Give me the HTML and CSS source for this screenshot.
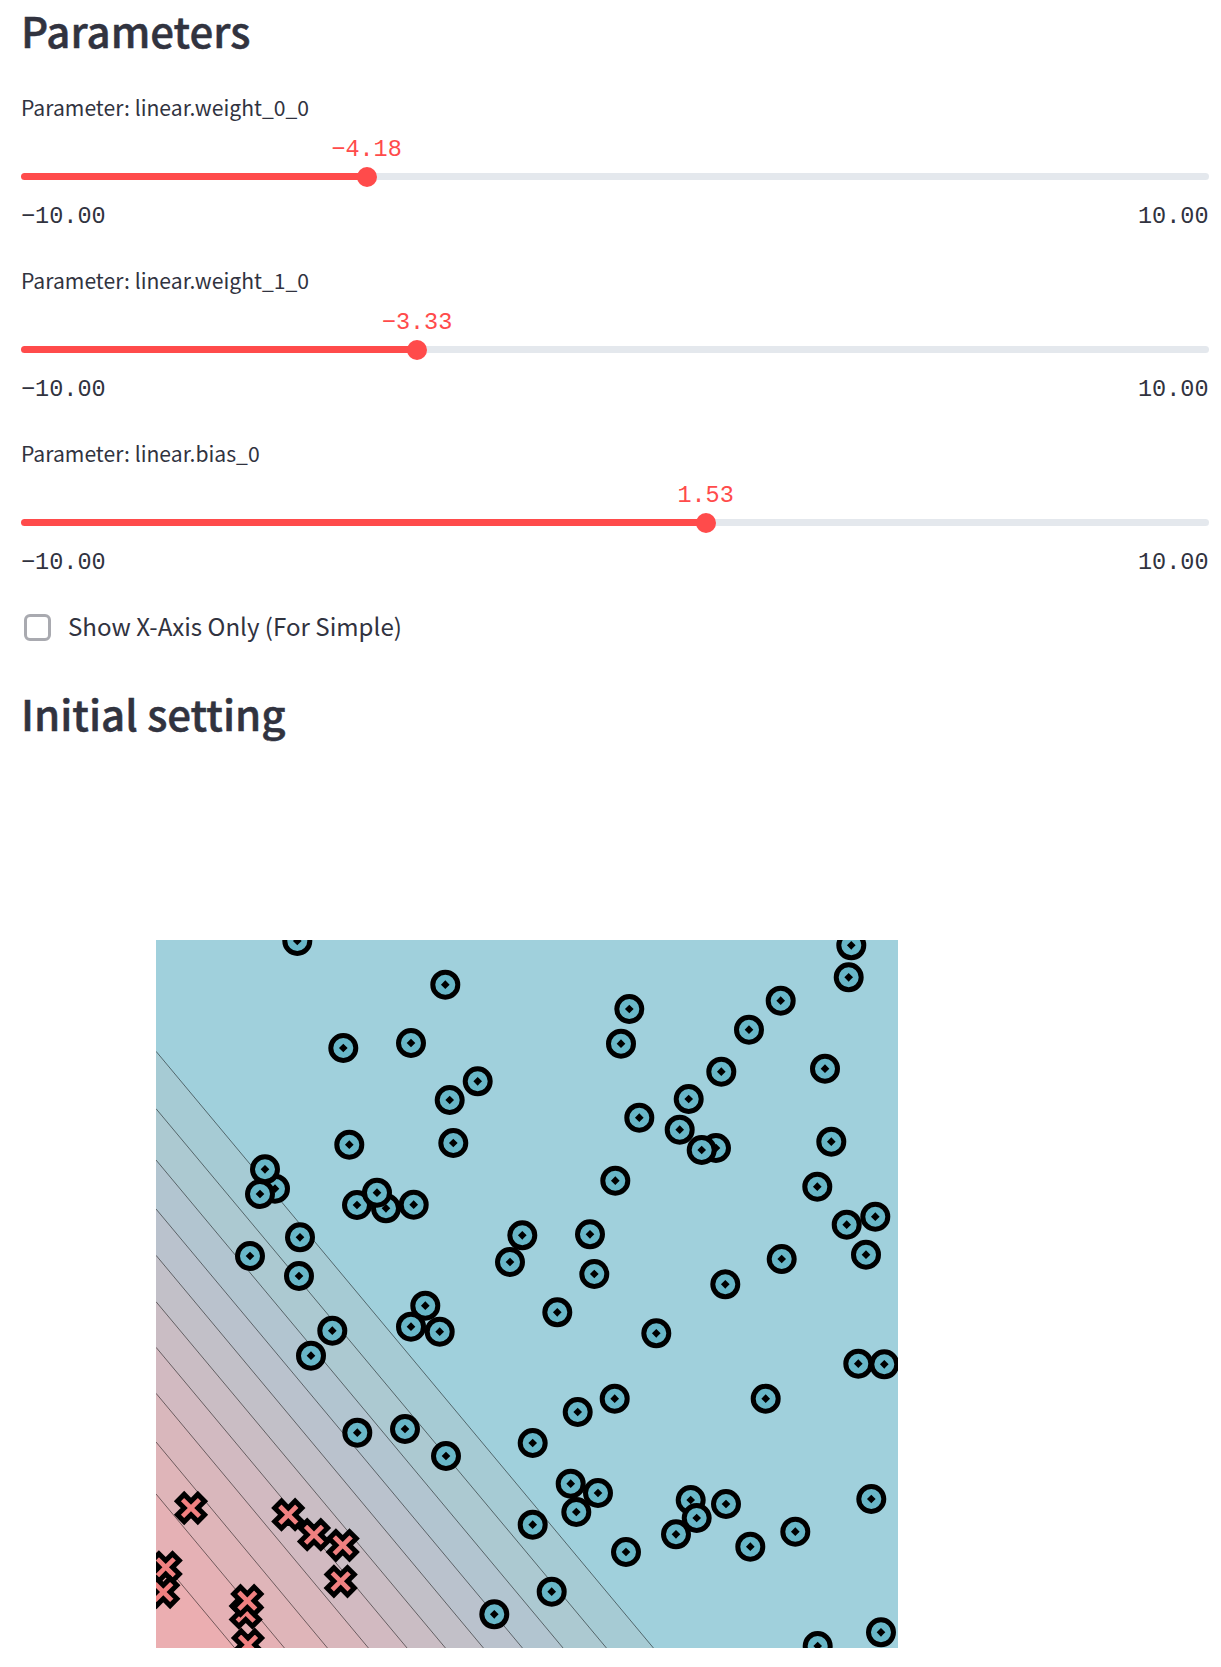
FILE: index.html
```html
<!DOCTYPE html>
<html lang="en">
<head>
<meta charset="utf-8">
<title>Parameters</title>
<link rel="stylesheet" href="styles.css">
</head>
<body>
<main class="page">
  <h2 class="heading">Parameters</h2>
  <section class="sliders">
    <div class="slider">
      <label class="slider-label">Parameter: linear.weight_0_0</label>
      <div class="slider-body" style="--value: 29.1%">
        <output class="slider-value">−4.18</output>
        <div class="track"><div class="thumb"></div></div>
        <div class="range"><span>−10.00</span><span>10.00</span></div>
      </div>
    </div>
    <div class="slider">
      <label class="slider-label">Parameter: linear.weight_1_0</label>
      <div class="slider-body" style="--value: 33.35%">
        <output class="slider-value">−3.33</output>
        <div class="track"><div class="thumb"></div></div>
        <div class="range"><span>−10.00</span><span>10.00</span></div>
      </div>
    </div>
    <div class="slider">
      <label class="slider-label">Parameter: linear.bias_0</label>
      <div class="slider-body" style="--value: 57.65%">
        <output class="slider-value">1.53</output>
        <div class="track"><div class="thumb"></div></div>
        <div class="range"><span>−10.00</span><span>10.00</span></div>
      </div>
    </div>
  </section>
  <label class="check"><span class="box"></span><span>Show X-Axis Only (For Simple)</span></label>
  <h2 class="heading heading-setting">Initial setting</h2>
  <svg class="plot" id="plot" viewBox="0 0 742.3 708.3" width="742.3" height="708.3"></svg>
</main>
<script src="plot.js"></script>
</body>
</html>
```
FILE: styles.css
```css
* { box-sizing: border-box; }
body {
  margin: 0;
  background: #fff;
  color: #31333f;
  font-family: "Noto Sans CJK SC", "Noto Sans", sans-serif;
}
.page { padding: 0 12.5px 0 21px; }
.heading {
  margin: 0;
  font-size: 42px;
  line-height: 59px;
  font-weight: 500;
  white-space: nowrap;
  -webkit-text-stroke: 0.5px currentColor;
}
.sliders { padding-top: 34px; }
.slider { height: 173px; }
.slider-label {
  display: block;
  font-size: 21.15px;
  line-height: 28px;
  white-space: nowrap;
}
.slider-body {
  padding-top: 16px;
  font-family: "Liberation Mono", monospace;
  font-size: 23.5px;
  line-height: 26px;
}
.slider-value {
  display: block;
  width: max-content;
  margin-left: var(--value);
  transform: translateX(-50%);
  color: #ff4b4b;
}
.track {
  display: flex;
  align-items: center;
  height: 7px;
  margin-top: 10px;
  border-radius: 4px;
  background: linear-gradient(to right, #ff4b4b var(--value), #e4e8ed var(--value));
}
.thumb {
  flex: none;
  width: 20px;
  height: 20px;
  margin-left: calc(var(--value) - 10px);
  border-radius: 50%;
  background: #ff4b4b;
}
.range { display: flex; justify-content: space-between; padding-top: 24px; }
.check {
  display: flex;
  align-items: center;
  gap: 17px;
  height: 34px;
  margin-top: -3px;
  padding-left: 3px;
  font-size: 24.1px;
  line-height: 34px;
}
.box { width: 27px; height: 27px; margin-top: 2px; border: 3px solid #a9aab0; border-radius: 6px; }
.heading-setting { margin-top: 40px; }
.plot { display: block; margin: 198px 0 0 135px; overflow: hidden; }
.contour { stroke: #000; stroke-opacity: 0.5; stroke-width: 1; }
.marker { stroke: #000; stroke-width: 5; }
.positive { fill: #69b7c8; }
.negative { fill: #f08080; }
```
FILE: plot.js
```js
const plot = document.getElementById("plot");
const W = 742.3, H = 708.3;

function add(tag, attrs) {
  const el = document.createElementNS("http://www.w3.org/2000/svg", tag);
  for (const k in attrs) el.setAttribute(k, attrs[k]);
  plot.appendChild(el);
}

// Each level crosses the left edge at y and the bottom edge at x.
const levels = [
  [111.3, 497.7, "#a6cbd4"], [168.7, 450.7, "#acc9d1"], [220, 407.3, "#b2c5d0"],
  [269, 366.7, "#bac2cd"], [315.3, 327.7, "#c2c0c8"], [361.7, 289.7, "#cabdc4"],
  [407.3, 251.3, "#d2bac1"], [453.3, 212.7, "#d9b7bc"], [502, 171.7, "#dfb5b9"],
  [554, 128.7, "#e5b1b5"], [613.7, 79, "#ebaeb1"]
];
add("rect", { width: W, height: H, fill: "#a0d0dc" });
for (const [y, x, fill] of levels) add("path", { d: `M0,${y}L${x},${H}H0Z`, fill });
for (const [y, x] of levels) add("path", { d: `M0,${y}L${x},${H}`, class: "contour" });

const positive = [
  [141.3,1],[289.3,44.7],[187.3,108],[255,103],[321.7,141.3],[293.7,160],[297.3,203],[193.3,204.7],
  [119,248.7],[109,229.3],[104,254],[230,268.3],[201,265],[221,252.7],[257.7,264.7],[144,297.3],
  [94,316],[143,336],[354,322],[366.3,295.3],[473.3,69],[465,103.7],[695.3,5.3],[692.7,37.3],
  [624.7,60.7],[593,89.7],[565.3,131.7],[669,128.7],[532.7,159],[483.3,177.7],[523.7,189.7],
  [560,208],[545.7,210],[675.3,201.7],[459.3,240.7],[661.3,246.7],[690.7,284.7],[719.3,276.7],
  [710,314.7],[434,294.3],[438.3,334],[625.7,319],[569.3,344.3],[255,386.7],[269.3,365.7],
  [283.7,391.7],[176.3,390.7],[155,415.7],[201.3,492.7],[249,489],[290,516],[338.3,674.3],
  [401.3,372.3],[500.3,393.3],[702.3,423.7],[728.3,424.3],[458.7,458.7],[421.7,472],[609.7,458.7],
  [376.7,503],[442,553],[414.7,543.7],[420.3,572],[376.7,584.7],[534.7,560],[520,594.3],
  [540.7,578],[570,564],[715.3,559],[470,612],[594.3,606.7],[639.3,591.7],[395.7,651.7],
  [725,692.3],[661.7,706]
];
const negative = [
  [35,568],[132.3,574.7],[158,594.7],[186.7,605.3],[184.7,641.3],[9.7,627.3],[7.3,652],
  [89.7,672.7],[92,704.7],[91.3,660.7]
];
const dot = "M12.5,0A12.5,12.5 0 1,1 0,-12.5A12.5,12.5 0 0,1 12.5,0ZM0,.8L.8,0L0,-.8L-.8,0Z";
const cross = "M0,6.8l6.8,6.8l6.8,-6.8l-6.8,-6.8l6.8,-6.8l-6.8,-6.8l-6.8,6.8l-6.8,-6.8l-6.8,6.8l6.8,6.8l-6.8,6.8l6.8,6.8Z";
for (const [x, y] of positive) add("path", { d: dot, transform: `translate(${x},${y})`, class: "marker positive" });
for (const [x, y] of negative) add("path", { d: cross, transform: `translate(${x},${y})`, class: "marker negative" });
```
